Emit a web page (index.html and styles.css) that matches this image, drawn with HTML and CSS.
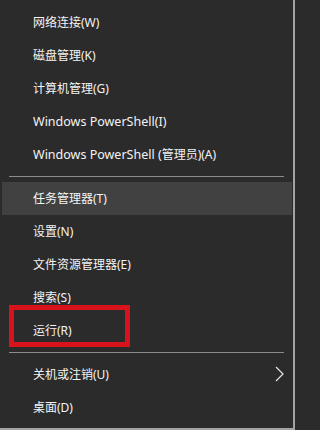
FILE: index.html
```html
<!DOCTYPE html>
<html lang="zh-CN">
<head>
<meta charset="utf-8">
<title>Win+X</title>
<link rel="stylesheet" href="styles.css">
</head>
<body>
<div class="menu">
  <ul class="group first">
    <li class="item">网络连接(W)</li>
    <li class="item">磁盘管理(K)</li>
    <li class="item">计算机管理(G)</li>
    <li class="item"><span class="latin">Windows PowerShell(I)</span></li>
    <li class="item"><span class="latin">Windows PowerShell (</span>管理员)(A)</li>
  </ul>
  <div class="sep"></div>
  <ul class="group">
    <li class="item hover">任务管理器(T)</li>
    <li class="item">设置(N)</li>
    <li class="item">文件资源管理器(E)</li>
    <li class="item">搜索(S)</li>
    <li class="item marked">运行(R)<span class="redbox"></span></li>
  </ul>
  <div class="sep"></div>
  <ul class="group">
    <li class="item sub">关机或注销(U)<svg class="chev" width="9" height="16" viewBox="0 0 9 16"><polyline points="1,1 8,8 1,15" fill="none" stroke="#e6e6e6" stroke-width="1.2"/></svg></li>
    <li class="item">桌面(D)</li>
  </ul>
</div>
</body>
</html>
```

FILE: styles.css
```css
html, body {
  margin: 0;
  padding: 0;
  background: #2b2b2b;
}
.menu {
  box-sizing: border-box;
  width: 295px;
  height: 430px;
  background: #2b2b2b;
  border-right: 2px solid #a3a3a3;
  border-bottom: 2px solid #a3a3a3;
  padding-top: 6px;
  font-family: "Noto Sans", "Noto Sans CJK SC", sans-serif;
  font-size: 12px;
  color: #f4f4f4;
}
.group {
  list-style: none;
  margin: 0;
  padding: 0 1px 0 2px;
}
.item {
  position: relative;
  box-sizing: border-box;
  height: 33px;
  line-height: 32px;
  padding: 1px 0 0 31px;
  white-space: nowrap;
}
.latin {
  font-size: 12.5px;
}
.item.hover {
  background: #414141;
}
.sep {
  height: 1px;
  background: #8c8c8c;
  margin: 5px 9px 5px 9px;
}
.chev {
  position: absolute;
  right: 8px;
  top: 8px;
}
.redbox {
  position: absolute;
  box-sizing: border-box;
  left: 7px;
  top: -9px;
  width: 121px;
  height: 42px;
  border: 5px solid #d9131b;
}
```
